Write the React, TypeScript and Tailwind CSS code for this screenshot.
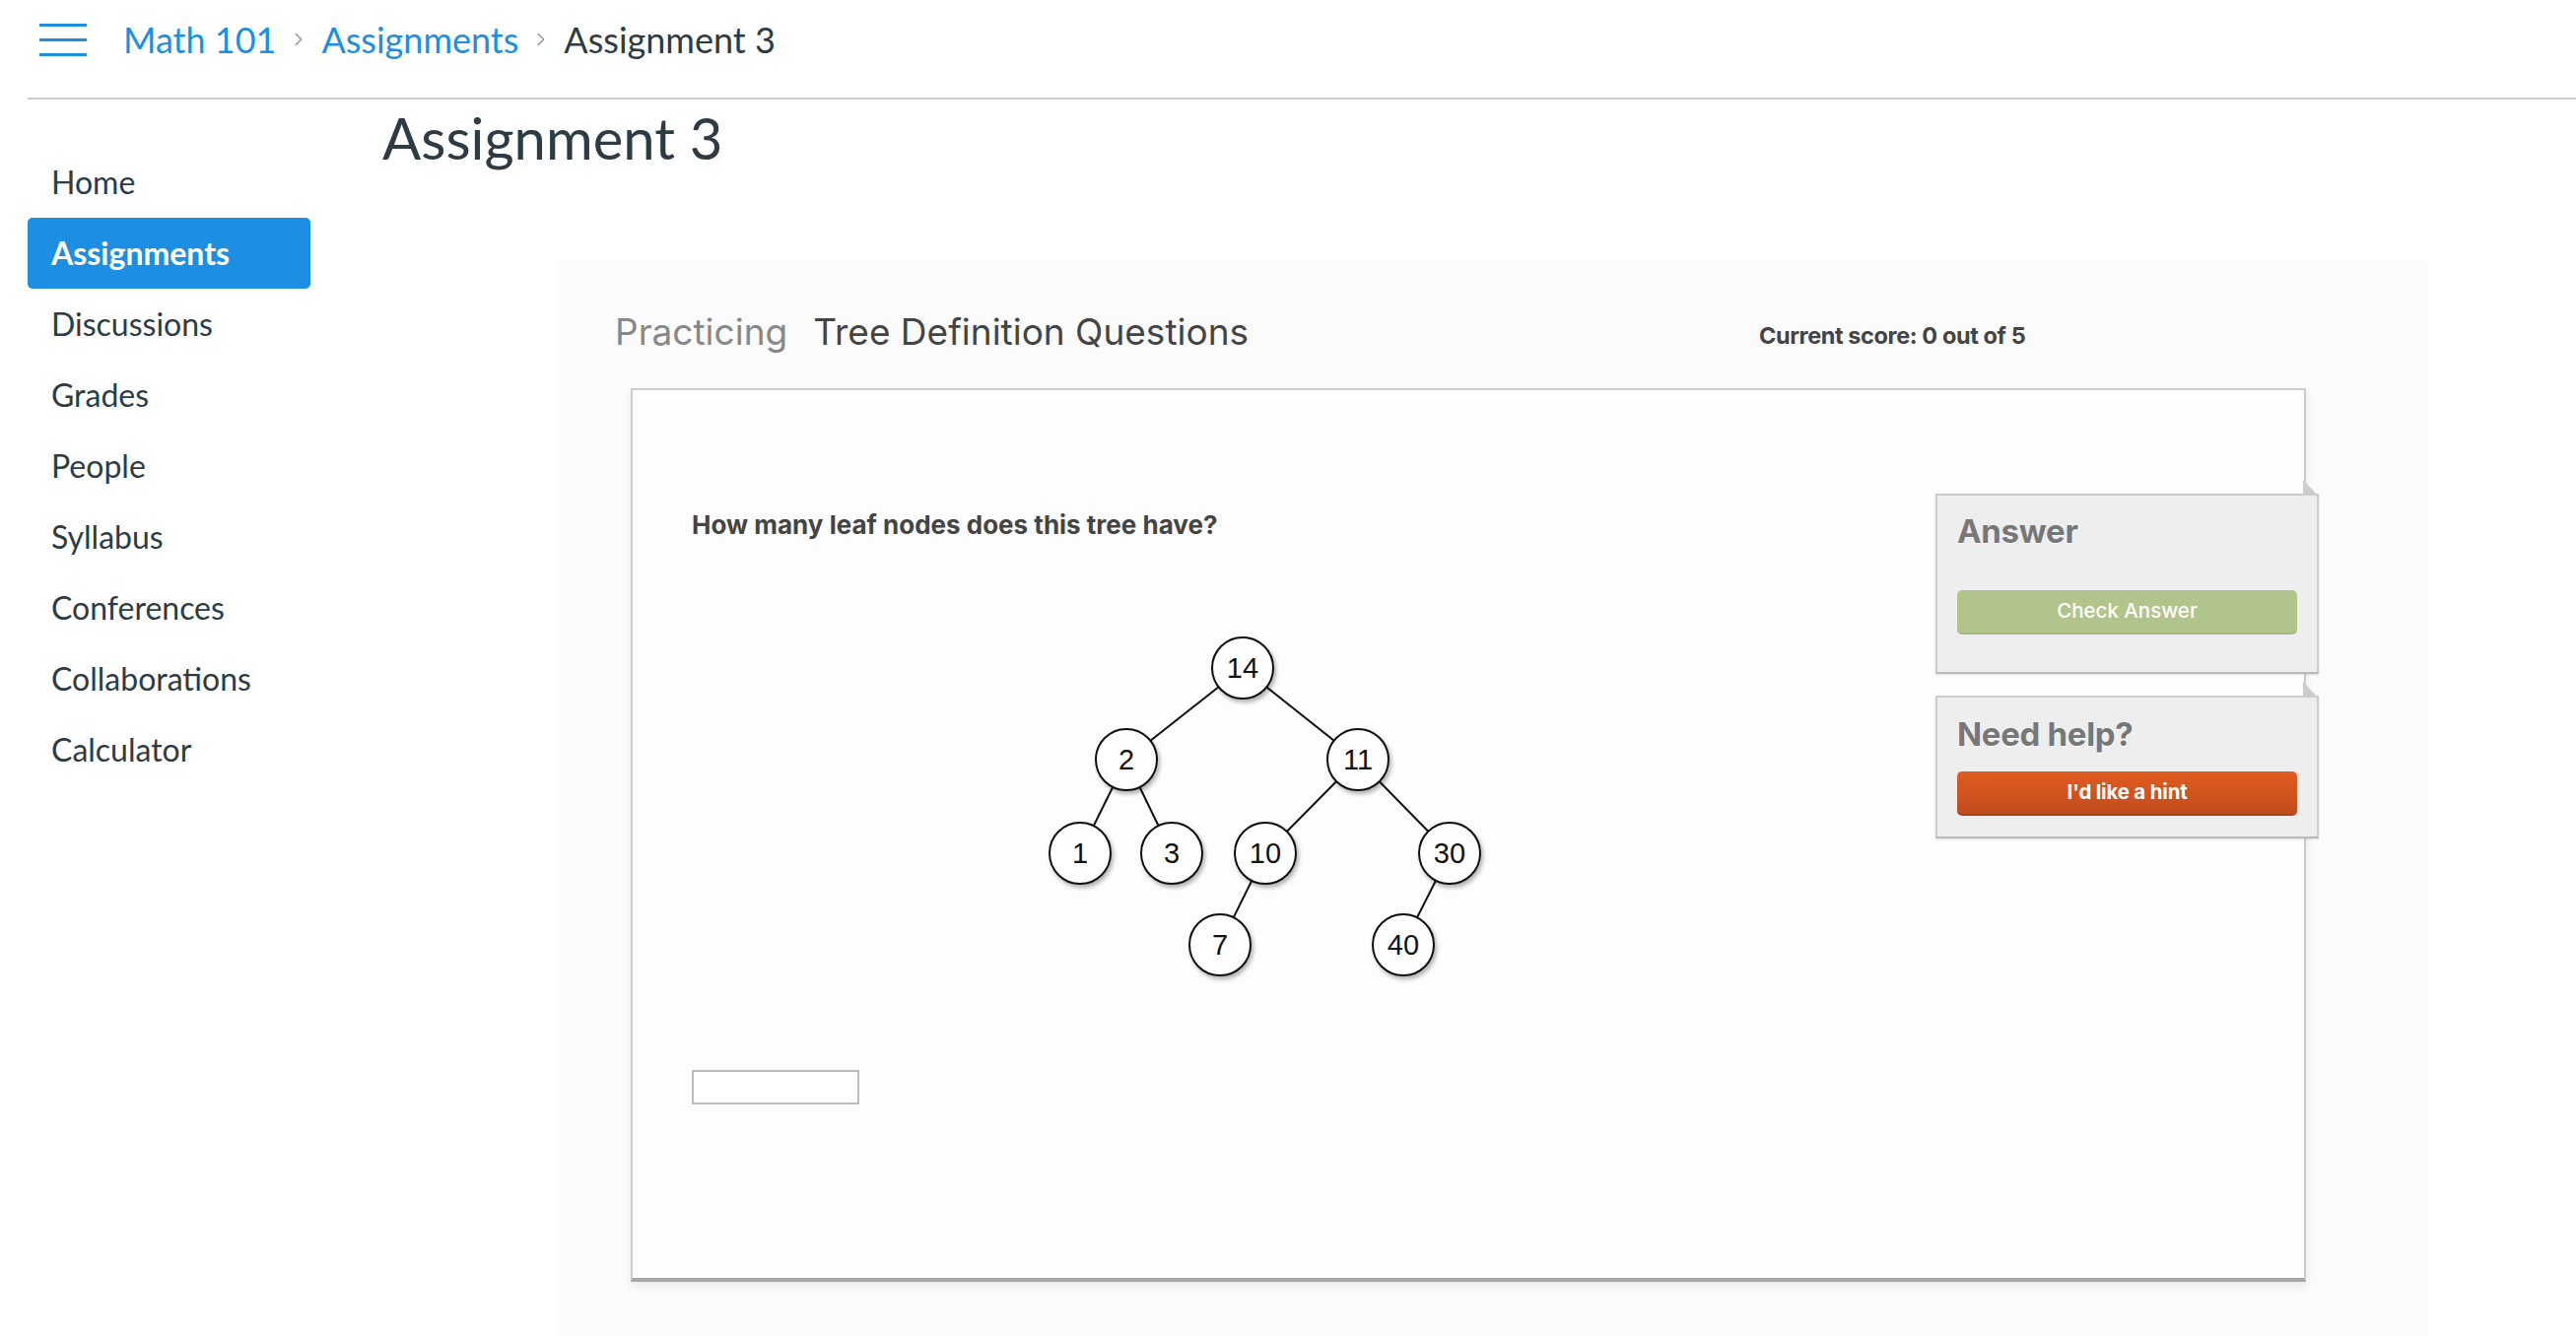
import { ChevronRight } from "lucide-react";

const NAV = [
  "Home",
  "Assignments",
  "Discussions",
  "Grades",
  "People",
  "Syllabus",
  "Conferences",
  "Collaborations",
  "Calculator",
];

// tree layout, coordinates inside the svg
const NODES: Record<string, [number, number]> = {
  "14": [210, 47],
  "2": [92, 140],
  "11": [327, 140],
  "1": [45, 235],
  "3": [138, 235],
  "10": [233, 235],
  "30": [420, 235],
  "7": [187, 328],
  "40": [373, 328],
};

const EDGES: [string, string][] = [
  ["14", "2"],
  ["14", "11"],
  ["2", "1"],
  ["2", "3"],
  ["11", "10"],
  ["11", "30"],
  ["10", "7"],
  ["30", "40"],
];

const Tree = () => (
  <svg width="470" height="380" viewBox="0 0 470 380" className="block">
    <defs>
      <filter id="nodeShadow" x="-30%" y="-30%" width="160%" height="160%">
        <feDropShadow dx="2" dy="3" stdDeviation="2" floodColor="#000" floodOpacity="0.3" />
      </filter>
    </defs>
    {EDGES.map(([a, b]) => (
      <line
        key={a + "-" + b}
        x1={NODES[a][0]}
        y1={NODES[a][1]}
        x2={NODES[b][0]}
        y2={NODES[b][1]}
        stroke="#111"
        strokeWidth="2"
      />
    ))}
    {Object.entries(NODES).map(([label, [x, y]]) => (
      <g key={label}>
        <circle cx={x} cy={y} r="31" fill="#fff" stroke="#111" strokeWidth="2" filter="url(#nodeShadow)" />
        <text
          x={x}
          y={y + 10}
          textAnchor="middle"
          fontSize="29"
          fontFamily="'Liberation Sans', Arial, sans-serif"
          fill="#111"
        >
          {label}
        </text>
      </g>
    ))}
  </svg>
);

const Fold = () => (
  <svg width="15" height="16" viewBox="0 0 15 16" className="absolute -top-[16px] -right-[1px] block">
    <polygon points="0,0 15,16 0,16" fill="#cccccc" />
  </svg>
);

const SideBox = ({ title, children, pt, gap, pb }: { title: string; children: React.ReactNode; pt: string; gap: string; pb: string }) => (
  <div className={`relative bg-[#eeeeee] border-2 border-[#cccccc] border-b-[#b9b9b9] shadow-[0_1px_2px_rgba(0,0,0,0.12)] px-[20px] ${pt} ${pb}`}>
    <Fold />
    <div className="h-[41px] leading-[41px] text-[33px] font-bold text-[#777777] [text-shadow:0_1px_0_#ffffff] tracking-[-0.3px]">
      {title}
    </div>
    <div className={gap}>{children}</div>
  </div>
);

export default function App() {
  return (
    <div className="w-[2614px] h-[1356px] overflow-hidden bg-white font-['Lato',sans-serif] text-[#2d3b45]">
      {/* header / breadcrumb */}
      <div className="ml-[28px] h-[101px] border-b-2 border-[#c7cdd1]">
        <div className="flex items-center h-[80px] pl-[12px]">
          <div className="flex flex-col gap-[12px] w-[48px] mr-[37px]">
            <span className="h-[3px] bg-[#1c8fe2]" />
            <span className="h-[3px] bg-[#1c8fe2]" />
            <span className="h-[3px] bg-[#1c8fe2]" />
          </div>
          <span className="text-[36px] text-[#1a8fe3]">Math 101</span>
          <ChevronRight className="mx-[12px] text-[#8b969e]" size={22} strokeWidth={1.6} />
          <span className="text-[36px] text-[#1a8fe3]">Assignments</span>
          <ChevronRight className="mx-[12px] text-[#8b969e]" size={22} strokeWidth={1.6} />
          <span className="text-[36px]">Assignment 3</span>
        </div>
      </div>

      <div className="flex">
        {/* course nav */}
        <nav className="w-[315px] shrink-0 pl-[28px] pt-[48px]">
          {NAV.map((item) => (
            <div
              key={item}
              className={`h-[72px] flex items-center px-[24px] text-[32px] ${
                item === "Assignments" ? "bg-[#1c8fe2] text-white font-bold rounded-[5px]" : ""
              }`}
            >
              {item}
            </div>
          ))}
        </nav>

        {/* main content */}
        <div className="flex-1 flex flex-col">
          <div className="h-[76px] flex items-center pl-[73px]">
            <h1 className="text-[58px] font-normal">Assignment 3</h1>
          </div>

          <div className="ml-[249px] mt-[87px] w-[1900px] h-[1092px] bg-[#fbfbfb] pt-[52px] font-['Inter',sans-serif]">
            <div className="flex items-center h-[42px] pl-[60px]">
              <div className="w-[1161px] shrink-0 flex items-center gap-[26px] text-[37px]">
                <span className="text-[#888888]">Practicing</span>
                <span className="text-[#444444]">Tree Definition Questions</span>
              </div>
              <span className="mt-[7px] text-[23.5px] font-bold text-[#444444] tracking-[-0.4px]">Current score: 0 out of 5</span>
            </div>

            <div className="ml-[76px] mt-[36px] w-[1700px] h-[907px] bg-[#fdfdfd] border-2 border-[#cccccc] border-b-4 border-b-[#a6a6a6] shadow-[0_4px_8px_rgba(0,0,0,0.08)] flex items-start">
              <div className="flex-1 pl-[60px] pt-[121px]">
                <p className="text-[26px] font-bold text-[#444444] leading-[32px]">
                  How many leaf nodes does this tree have?
                </p>
                <div className="ml-[349px] mt-[82px]">
                  <Tree />
                </div>
                <div className="mt-[75px] w-[170px] h-[35px] bg-white border-2 border-[#bdbdbd]" />
              </div>

              <div className="w-[389px] shrink-0 mt-[105px] -mr-[15px] flex flex-col gap-[22px]">
                <SideBox title="Answer" pt="pt-[16px]" gap="mt-[39px]" pb="pb-[38px]">
                  <button className="w-full h-[45px] rounded-[5px] bg-[#b1c48b] border-b-2 border-[#a5b97e] text-white text-[20.5px] font-medium">
                    Check Answer
                  </button>
                </SideBox>
                <SideBox title="Need help?" pt="pt-[17px]" gap="mt-[17px]" pb="pb-[21px]">
                  <button className="w-full h-[45px] rounded-[5px] bg-gradient-to-b from-[#e25c20] to-[#c04c1c] border-b-2 border-[#a8431a] text-white text-[20.5px] font-bold tracking-[-0.2px]">
                    I'd like a hint
                  </button>
                </SideBox>
              </div>
            </div>
          </div>
        </div>
      </div>
    </div>
  );
}
